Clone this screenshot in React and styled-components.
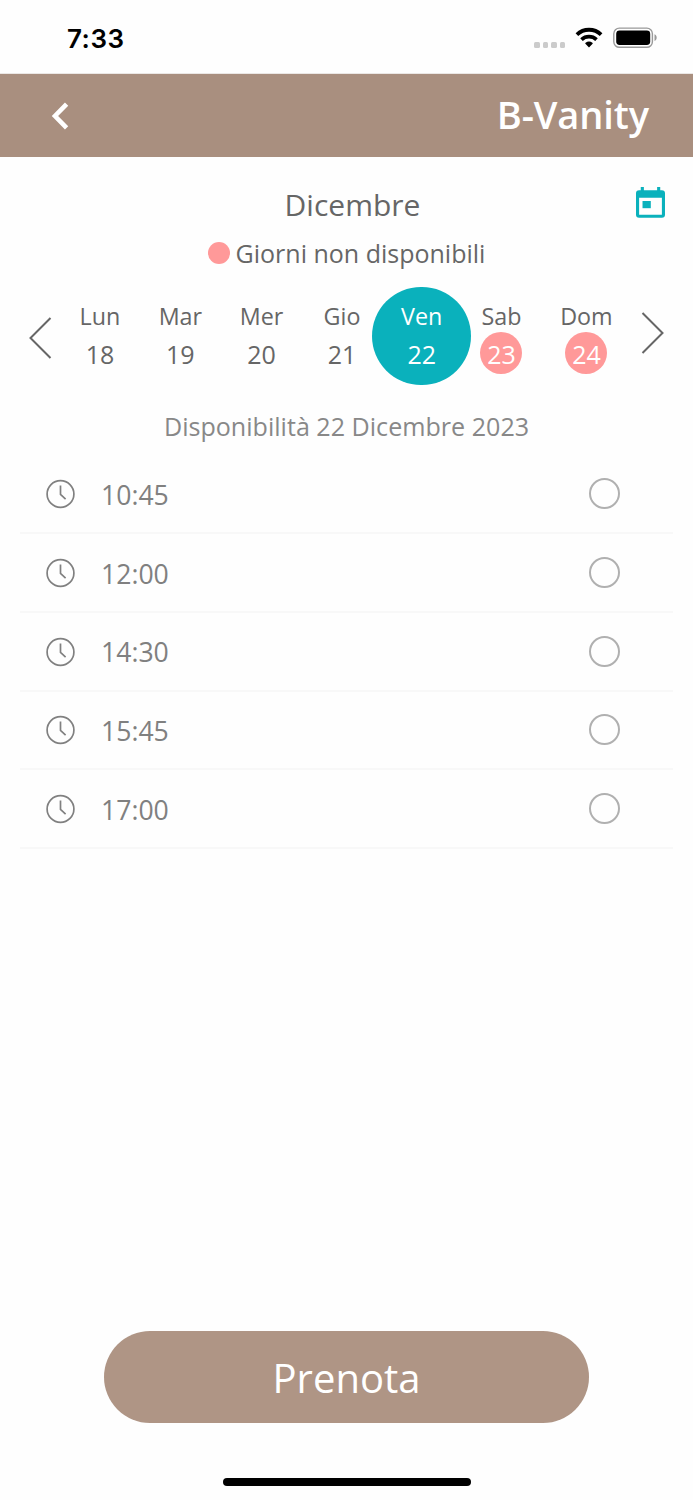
import { useState } from 'react';
import styled, { createGlobalStyle } from 'styled-components';

const days = [
    { name: 'Lun', number: 18 },
    { name: 'Mar', number: 19 },
    { name: 'Mer', number: 20 },
    { name: 'Gio', number: 21 },
    { name: 'Ven', number: 22 },
    { name: 'Sab', number: 23, unavailable: true },
    { name: 'Dom', number: 24, unavailable: true },
];

const slots = ['10:45', '12:00', '14:30', '15:45', '17:00'];

function StatusBar() {
    return (
        <Status>
            <Time>7:33</Time>
            <StatusIcons>
                <Signal>
                    <i /><i /><i /><i />
                </Signal>
                <svg width="28" height="21" viewBox="0 0 28 21">
                    <path d="M14 20.500l-3.600-3.700q-.5-.6.200-1a5.800 5.800 0 0 1 6.800 0q.7.4.2 1z" />
                    <path d="M6.500 12.700a10.900 10.900 0 0 1 15 0" fill="none" stroke="#000" strokeWidth="3.700" />
                    <path d="M1.900 7.600a17.500 17.500 0 0 1 24.200 0" fill="none" stroke="#000" strokeWidth="3.800" />
                </svg>
                <svg width="45" height="21" viewBox="0 0 45 21">
                    <rect x="0.8" y="1.1" width="38.6" height="19.2" rx="5.6" fill="none" stroke="#999" strokeWidth="1.4" />
                    <rect x="3.200" y="3.500" width="34" height="14.5" rx="3.4" />
                    <path d="M41.5 7.300v6.8c1.3-.5 2.2-1.9 2.2-3.4s-.9-2.9-2.2-3.4z" fill="#999" />
                </svg>
            </StatusIcons>
        </Status>
    )
}

function ClockIcon() {
    return (
        <svg width="29" height="30" viewBox="0 0 29 30" fill="none" stroke="#808080" strokeWidth="1.7">
            <circle cx="14.5" cy="15" r="13.4" />
            <path d="M14.500 6.400v9l5.100 4.700" />
        </svg>
    )
}

function App() {
    const [selected, setSelected] = useState(22);
    const [slot, setSlot] = useState(null);

    return (
        <>
            <GlobalStyle />
            <Screen>
                <StatusBar />
                <Header>
                    <svg width="18" height="28" viewBox="0 0 18 28" fill="none" stroke="#fff" strokeWidth="4.600">
                        <path d="M15.600 2.200L4 14l11.600 11.800" />
                    </svg>
                    <Brand>B-Vanity</Brand>
                </Header>
                <MonthRow>
                    <Month>Dicembre</Month>
                    <svg width="29" height="31" viewBox="0 0 28 31" preserveAspectRatio="none" fill="#0ab1bc">
                        <path fillRule="evenodd" d="M4.6 0h3v3.2h12.8V0h3v3.2H25a3 3 0 0 1 3 3v21.6a3 3 0 0 1-3 3H3a3 3 0 0 1-3-3V6.200a3 3 0 0 1 3-3h1.600zM3 10.800v17h22v-17z" />
                        <path d="M6.300 14h8v7.200h-8z" />
                    </svg>
                </MonthRow>
                <Legend><Dot />Giorni non disponibili</Legend>
                <Week>
                    <PrevArrow width="24" height="42" viewBox="0 0 24 42">
                        <path d="M21.500 1L1.500 21l20 20" />
                    </PrevArrow>
                    <Days>
                        {days.map((day) => (
                            <Day key={day.number} $selected={day.number === selected} onClick={() => setSelected(day.number)}>
                                <DayName>{day.name}</DayName>
                                <DayNumber $unavailable={day.unavailable}>{day.number}</DayNumber>
                            </Day>
                        ))}
                    </Days>
                    <NextArrow width="24" height="42" viewBox="0 0 24 42">
                        <path d="M2.500 1L22.500 21L2.500 41" />
                    </NextArrow>
                </Week>
                <Availability>Disponibilità {selected} Dicembre 2023</Availability>
                <Slots>
                    {slots.map((time) => (
                        <Slot key={time} onClick={() => setSlot(time)}>
                            <ClockIcon />
                            <SlotTime>{time}</SlotTime>
                            <Radio $checked={slot === time} />
                        </Slot>
                    ))}
                </Slots>
                <Footer>
                    <BookButton>Prenota</BookButton>
                    <HomeIndicator />
                </Footer>
            </Screen>
        </>
    )
}

const GlobalStyle = createGlobalStyle`
    * {
        box-sizing: border-box;
    }
    body {
        margin: 0;
        background: #fefefe;
        font-family: 'Open Sans', sans-serif;
    }
    svg {
        display: block;
        flex-shrink: 0;
    }
`;

const Screen = styled.div`
    display: flex;
    flex-direction: column;
    width: 693px;
    height: 1500px;
    overflow: hidden;
`;

const Status = styled.div`
    display: flex;
    justify-content: space-between;
    height: 74px;
    padding: 0 35px 0 67px;
    border-bottom: 1px solid #ebe7e5;
`;

const Time = styled.span`
    font-family: Inter, sans-serif;
    font-weight: 600;
    font-size: 26px;
    letter-spacing: 0.5px;
    line-height: 32px;
    padding-top: 23px;
`;

const StatusIcons = styled.div`
    display: flex;
    align-items: flex-start;
    gap: 10px;
    padding-top: 27px;
`;

const Signal = styled.div`
    display: flex;
    gap: 3px;
    padding-top: 15px;

    i {
        width: 5.500px;
        height: 6px;
        border-radius: 1.500px;
        background: #cbcbcb;
    }
`;

const Header = styled.header`
    display: flex;
    align-items: center;
    justify-content: space-between;
    height: 83.400px;
    padding: 0 44px 0 51px;
    background: #a98f7f;
`;

const Brand = styled.h1`
    margin: 0;
    color: white;
    font-weight: 600;
    font-size: 38px;
    letter-spacing: -0.1px;
    line-height: 50px;
    padding-bottom: 4px;
`;

const MonthRow = styled.div`
    display: flex;
    align-items: flex-start;
    height: 76.600px;
    padding: 29.600px 28px 0 69px;
`;

const Month = styled.h2`
    flex: 1;
    margin: 0;
    color: #666;
    font-weight: 400;
    font-size: 30px;
    line-height: 35px;
    text-align: center;
`;

const Legend = styled.div`
    display: flex;
    align-items: center;
    justify-content: center;
    gap: 6px;
    height: 38px;
    color: #666;
    font-size: 25px;
`;

const Dot = styled.span`
    width: 22px;
    height: 22px;
    border-radius: 50%;
    background: #ff9999;
`;

const Week = styled.div`
    display: flex;
    justify-content: space-between;
    height: 113px;
    padding: 15px 29px 0;
`;

const Arrow = styled.svg`
    fill: none;
    stroke: #666;
    stroke-width: 2;
`;

const PrevArrow = styled(Arrow)`
    margin-top: 30px;
`;

const NextArrow = styled(Arrow)`
    margin-top: 25px;
`;

const Days = styled.div`
    display: flex;
    gap: 37.700px;
    padding-right: 1.400px;
`;

const Day = styled.div`
    display: flex;
    flex-direction: column;
    align-items: center;
    width: ${(props) => (props.$selected ? '98.5px' : 'auto')};
    height: 98.500px;
    margin: ${(props) => (props.$selected ? '0 -28.2px' : '0')};
    padding-top: 13px;
    border-radius: 50%;
    cursor: pointer;
    color: ${(props) => (props.$selected ? 'white' : '#666')};
    background: ${(props) => (props.$selected ? '#0ab1bc' : 'transparent')};
`;

const DayName = styled.span`
    font-size: 23.300px;
    line-height: 32px;
`;

const DayNumber = styled.span`
    width: 42px;
    height: 42px;
    border-radius: 50%;
    font-size: 25px;
    line-height: 44px;
    text-align: center;
    color: ${(props) => (props.$unavailable ? 'white' : 'inherit')};
    background: ${(props) => (props.$unavailable ? '#ff9999' : 'transparent')};
`;

const Availability = styled.p`
    margin: 0;
    height: 70.500px;
    padding-top: 23px;
    color: #888;
    font-size: 25.100px;
    line-height: 36px;
    text-align: center;
`;

const Slots = styled.div`
    padding: 0 20px;
`;

const Slot = styled.div`
    display: flex;
    align-items: center;
    height: 78.700px;
    padding: 1px 53px 0 26px;
    border-bottom: 2px solid #f8f8f8;
    cursor: pointer;
`;

const SlotTime = styled.span`
    flex: 1;
    padding: 1px 0 0 26px;
    color: #808080;
    font-size: 26.600px;
    line-height: 36px;
`;

const Radio = styled.span`
    width: 31px;
    height: 31px;
    margin-bottom: 1px;
    border: 2px solid #b0b0b0;
    border-radius: 50%;
    background: ${(props) => (props.$checked ? '#0ab1bc' : 'transparent')};
`;

const Footer = styled.footer`
    display: flex;
    flex-direction: column;
    align-items: center;
    gap: 55px;
    margin-top: auto;
    padding-bottom: 14px;
`;

const BookButton = styled.button`
    width: 485px;
    height: 92px;
    border: none;
    border-radius: 46px;
    background: #af9585;
    color: white;
    font-family: inherit;
    font-size: 40px;
    cursor: pointer;
`;

const HomeIndicator = styled.div`
    width: 248px;
    height: 8px;
    border-radius: 4px;
    background: black;
`;

export default App;
